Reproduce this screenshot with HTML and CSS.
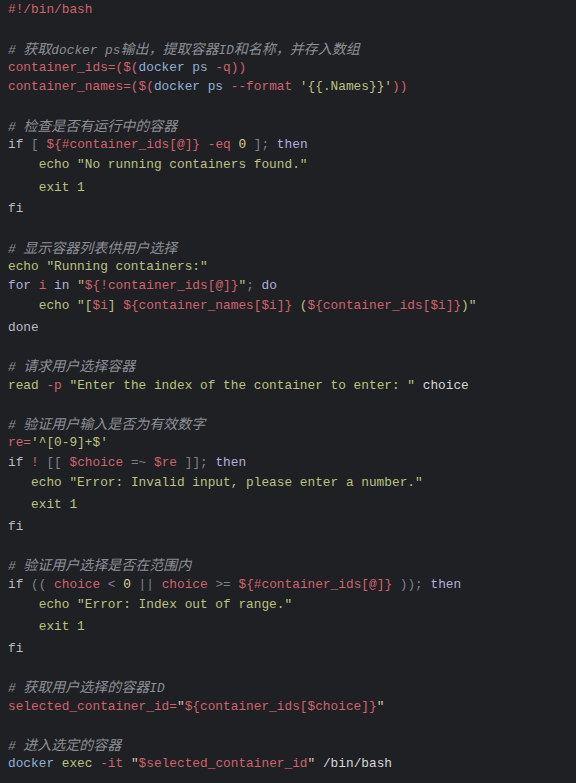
FILE: index.html
```html
<!DOCTYPE html>
<html lang="zh">
<head>
<meta charset="utf-8">
<title>docker enter script</title>
<link rel="stylesheet" href="styles.css">
</head>
<body>
<div class="code">
<div class="ln"><span class="r">#!/bin/bash</span></div>
<div class="ln"></div>
<div class="ln c"># <span class="cjk">获取</span>docker ps<span class="cjk">输出，提取容器</span>ID<span class="cjk">和名称，并存入数组</span></div>
<div class="ln"><span class="r">container_ids=($(</span><span class="b">docker ps</span> <span class="r">-q))</span></div>
<div class="ln"><span class="r">container_names=($(</span><span class="b">docker ps</span> <span class="r">--format</span> <span class="s">'{{.Names}}'</span><span class="r">))</span></div>
<div class="ln"></div>
<div class="ln c"># <span class="cjk">检查是否有运行中的容器</span></div>
<div class="ln"><span class="k">if</span> <span class="d">[</span> <span class="r">${#container_ids[@]}</span> <span class="r">-eq</span> <span class="n">0</span> <span class="d">];</span> <span class="p">then</span></div>
<div class="ln ind">    <span class="s">echo "No running containers found."</span></div>
<div class="ln ind">    <span class="s">exit 1</span></div>
<div class="ln"><span class="k">fi</span></div>
<div class="ln"></div>
<div class="ln c"># <span class="cjk">显示容器列表供用户选择</span></div>
<div class="ln"><span class="s">echo "Running containers:"</span></div>
<div class="ln"><span class="p">for</span> <span class="r">i</span> <span class="p">in</span> <span class="s">"</span><span class="r">${!container_ids[@]}</span><span class="s">"</span><span class="d">;</span> <span class="p">do</span></div>
<div class="ln ind">    <span class="s">echo "[</span><span class="r">$i</span><span class="s">] </span><span class="r">${container_names[$i]}</span><span class="s"> (</span><span class="r">${container_ids[$i]}</span><span class="s">)"</span></div>
<div class="ln"><span class="k">done</span></div>
<div class="ln"></div>
<div class="ln c"># <span class="cjk">请求用户选择容器</span></div>
<div class="ln"><span class="s">read</span> <span class="r">-p</span> <span class="s">"Enter the index of the container to enter: "</span> <span class="w">choice</span></div>
<div class="ln"></div>
<div class="ln c"># <span class="cjk">验证用户输入是否为有效数字</span></div>
<div class="ln"><span class="r">re=</span><span class="s">'^[0-9]+$'</span></div>
<div class="ln"><span class="k">if</span> <span class="r">!</span> <span class="d">[[</span> <span class="r">$choice</span> <span class="d">=~</span> <span class="r">$re</span> <span class="d">]];</span> <span class="p">then</span></div>
<div class="ln ind">   <span class="s">echo "Error: Invalid input, please enter a number."</span></div>
<div class="ln ind">   <span class="s">exit 1</span></div>
<div class="ln"><span class="k">fi</span></div>
<div class="ln"></div>
<div class="ln c"># <span class="cjk">验证用户选择是否在范围内</span></div>
<div class="ln"><span class="k">if</span> <span class="d">((</span> <span class="r">choice</span> <span class="d">&lt;</span> <span class="n">0</span> <span class="d">||</span> <span class="r">choice</span> <span class="d">&gt;=</span> <span class="r">${#container_ids[@]}</span> <span class="d">));</span> <span class="p">then</span></div>
<div class="ln ind">    <span class="s">echo "Error: Index out of range."</span></div>
<div class="ln ind">    <span class="s">exit 1</span></div>
<div class="ln"><span class="k">fi</span></div>
<div class="ln"></div>
<div class="ln c"># <span class="cjk">获取用户选择的容器</span>ID</div>
<div class="ln"><span class="r">selected_container_id=</span><span class="q">"</span><span class="r">${container_ids[$choice]}</span><span class="q">"</span></div>
<div class="ln"></div>
<div class="ln c"># <span class="cjk">进入选定的容器</span></div>
<div class="ln"><span class="b">docker</span> <span class="s">exec</span> <span class="r">-it</span> <span class="q">"</span><span class="r">$selected_container_id</span><span class="q">"</span> <span class="w">/bin/bash</span></div>
</div>
</body>
</html>
```

FILE: styles.css
```css
html, body {
  margin: 0;
  padding: 0;
  background: #1f2023;
}

.code {
  padding: 0 0 0 8px;
  font-family: "Liberation Mono", "DejaVu Sans Mono", "Noto Sans CJK SC", monospace;
  font-size: 12.8px;
  color: #c8c8c8;
}

.ln {
  height: 19.25px;
  line-height: 19.25px;
  white-space: pre;
}

.ln.ind {
  height: 22.5px;
  line-height: 22.5px;
}

.c {
  color: #8b8f96;
  font-style: italic;
}

.cjk {
  font-family: "Noto Sans CJK SC", sans-serif;
  font-size: 14px;
  letter-spacing: 0;
}

.r { color: #cf6370; }
.s { color: #bcc282; }
.b { color: #8fb1d6; }
.k { color: #b9bcc6; }
.d { color: #7c818a; }
.p { color: #b3afdb; }
.n { color: #d8d493; }
.w { color: #d9d9d9; }
.q { color: #d9c9a8; }
```
